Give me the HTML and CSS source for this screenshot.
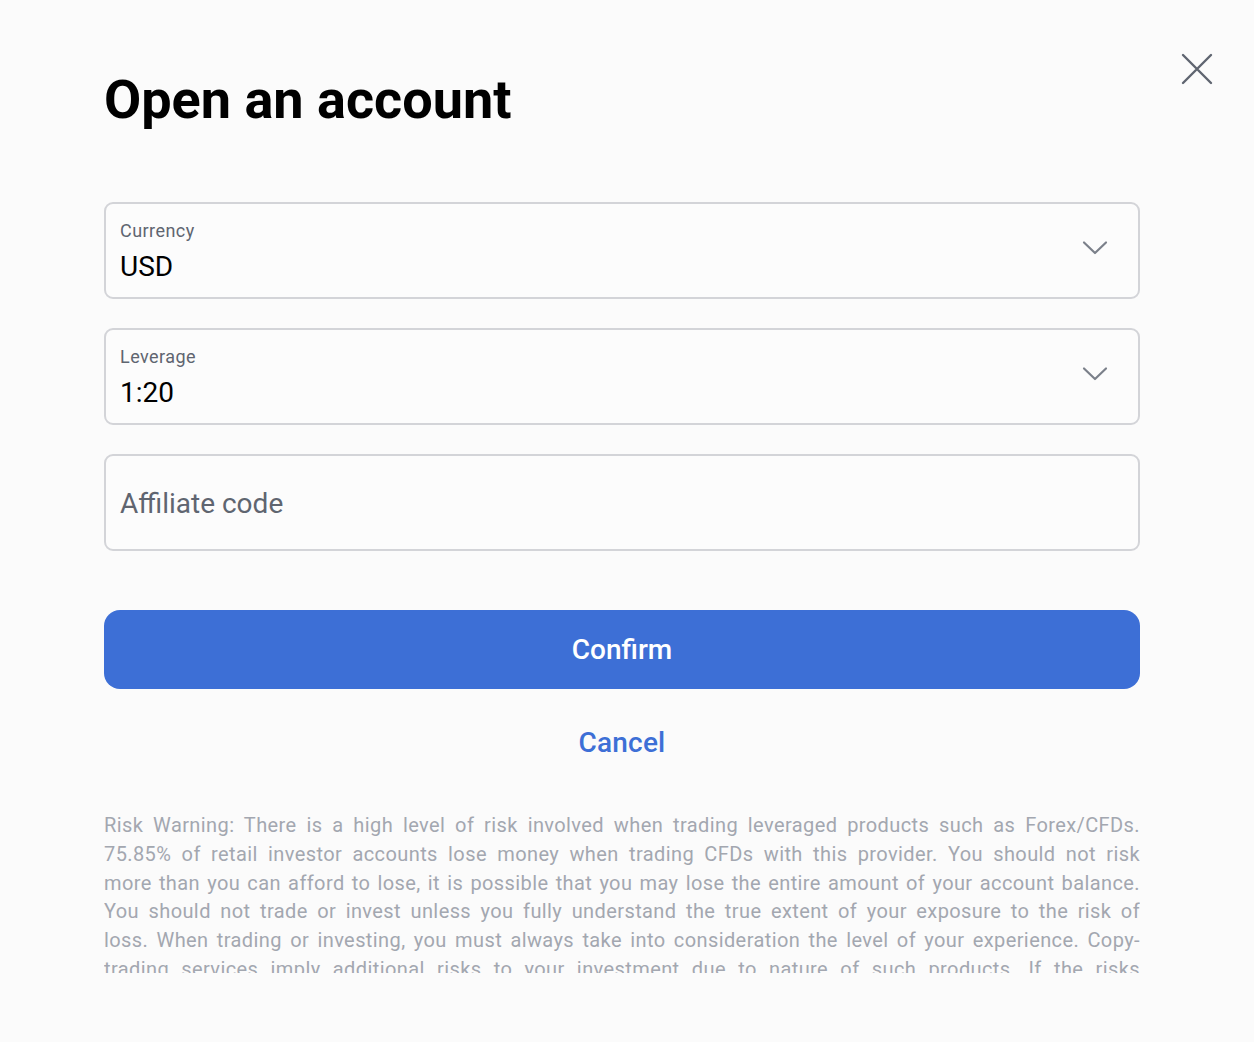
FILE: index.html
```html
<!DOCTYPE html>
<html lang="en">
<head>
<meta charset="utf-8">
<title>Open an account</title>
<link rel="stylesheet" href="styles.css">
</head>
<body>
<div class="page">
  <button class="close" aria-label="Close">
    <svg width="32" height="32" viewBox="0 0 32 32"><path d="M2 2L30 30M30 2L2 30" stroke="#5f6570" stroke-width="2.4" stroke-linecap="round" fill="none"/></svg>
  </button>
  <main class="content">
    <h1 class="title">Open an account</h1>
    <div class="fields">
      <div class="field select">
        <div class="field-text">
          <span class="label">Currency</span>
          <span class="value">USD</span>
        </div>
        <svg class="chevron" width="26" height="16" viewBox="0 0 26 16"><path d="M2 2.5L13 13L24 2.5" stroke="#7b808a" stroke-width="2.2" fill="none" stroke-linecap="round" stroke-linejoin="round"/></svg>
      </div>
      <div class="field select">
        <div class="field-text">
          <span class="label">Leverage</span>
          <span class="value">1:20</span>
        </div>
        <svg class="chevron" width="26" height="16" viewBox="0 0 26 16"><path d="M2 2.5L13 13L24 2.5" stroke="#7b808a" stroke-width="2.2" fill="none" stroke-linecap="round" stroke-linejoin="round"/></svg>
      </div>
      <div class="field">
        <span class="placeholder">Affiliate code</span>
      </div>
    </div>
    <button class="confirm">Confirm</button>
    <button class="cancel">Cancel</button>
    <div class="risk">
      <p>Risk Warning: There is a high level of risk involved when trading leveraged products such as Forex/CFDs.<br>75.85% of retail investor accounts lose money when trading CFDs with this provider. You should not risk<br>more than you can afford to lose, it is possible that you may lose the entire amount of your account balance.<br>You should not trade or invest unless you fully understand the true extent of your exposure to the risk of<br>loss. When trading or investing, you must always take into consideration the level of your experience. Copy-<br>trading services imply additional risks to your investment due to nature of such products. If the risks<br>involved seem unclear to you, please seek independent professional advice.</p>
    </div>
  </main>
</div>
</body>
</html>
```
FILE: styles.css
```css
* { box-sizing: border-box; }
html, body {
  margin: 0;
  padding: 0;
  background: #fbfbfb;
  font-family: Roboto, "Liberation Sans", sans-serif;
}
.page {
  position: relative;
  width: 1254px;
  height: 1042px;
}
.close {
  position: absolute;
  top: 53px;
  left: 1181px;
  width: 32px;
  height: 32px;
  padding: 0;
  border: 0;
  background: none;
  cursor: pointer;
}
.close svg { display: block; }
.content {
  width: 1036px;
  margin-left: 104px;
  padding-top: 68px;
  display: flex;
  flex-direction: column;
}
.title {
  margin: 0;
  font-size: 54px;
  line-height: 64px;
  font-weight: 700;
  color: #000;
}
.fields {
  margin-top: 70px;
  display: flex;
  flex-direction: column;
  gap: 29px;
}
.field {
  height: 97px;
  border: 2px solid #d3d4d8;
  border-radius: 9px;
  background: #fcfcfc;
  padding: 0 30px 0 14px;
  display: flex;
  align-items: center;
  justify-content: space-between;
}
.field-text {
  display: flex;
  flex-direction: column;
  gap: 11px;
  margin-top: 2px;
}
.label {
  font-size: 18px;
  line-height: 20px;
  letter-spacing: 0.45px;
  color: #5f6570;
}
.value {
  font-size: 28px;
  line-height: 30px;
  color: #000;
}
.placeholder {
  font-size: 28px;
  line-height: 30px;
  color: #5f6570;
  margin-top: 3px;
}
.chevron { display: block; margin-top: -5px; }
.confirm {
  margin-top: 59px;
  height: 79px;
  border: 0;
  border-radius: 16px;
  background: #3d6fd6;
  color: #fff;
  font-family: inherit;
  font-size: 28px;
  font-weight: 500;
  cursor: pointer;
}
.cancel {
  margin-top: 35px;
  align-self: center;
  border: 0;
  background: none;
  color: #3d6fd6;
  font-family: inherit;
  font-size: 28px;
  font-weight: 500;
  line-height: 38px;
  letter-spacing: 0.2px;
  padding: 0;
  cursor: pointer;
}
.risk {
  margin-top: 49px;
  height: 162px;
  overflow: hidden;
}
.risk p {
  margin: 0;
  font-size: 20px;
  line-height: 28.8px;
  letter-spacing: 0.4px;
  color: #a3a7b0;
  text-align: justify;
  text-align-last: justify;
}
```
